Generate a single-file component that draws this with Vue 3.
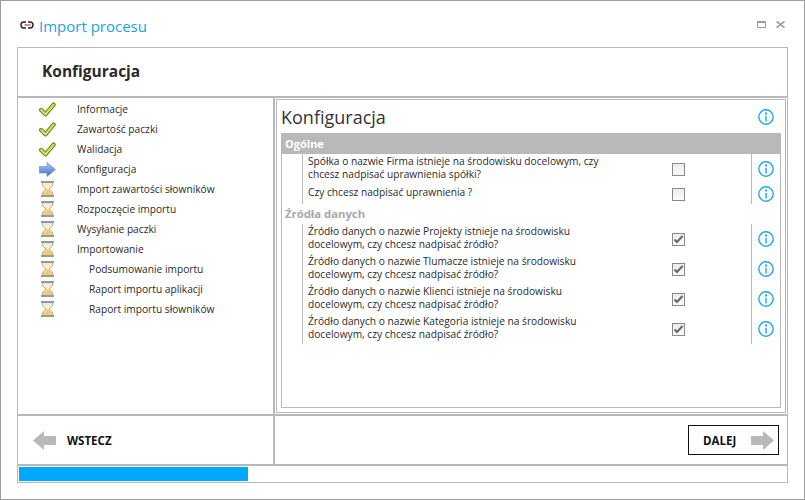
<template>
  <div class="window">
    <div class="titlebar">
      <svg class="logo" width="14" height="8" viewBox="0 0 14 8">
        <path d="M6 1H4a3 3 0 0 0 0 6h2M8 1h2a3 3 0 0 1 0 6H8" fill="none" stroke="#222" stroke-width="1.4" />
        <path d="M4.500 4h6" stroke="#d33" stroke-width="1.200" />
      </svg>
      <span class="title">Import procesu</span>
      <span class="win-buttons">
        <svg width="9" height="7" viewBox="0 0 9 7">
          <path d="M.5.5h8v6h-8z" fill="none" stroke="#999" />
          <path d="M0 1.500h9" stroke="#999" />
        </svg>
        <svg width="9" height="7" viewBox="0 0 9 7">
          <path d="M.5.300l8 6.400M8.500.300l-8 6.400" fill="none" stroke="#999" stroke-width="1.500" />
        </svg>
      </span>
    </div>

    <div class="frame">
      <div class="heading">Konfiguracja</div>

      <div class="middle">
        <ul class="steps">
          <li v-for="step in steps" :key="step.label" class="step" :class="{ sub: step.sub }">
            <span class="step-icon">
              <svg v-if="step.state === 'done'" width="17" height="15" viewBox="0 0 17 15">
                <path d="M2.200 8l4.300 4.300L14.600 2.700" fill="none" stroke="#6d9612" stroke-width="4.400" stroke-linejoin="round" stroke-linecap="round" />
                <path d="M2.200 8l4.300 4.300L14.600 2.700" fill="none" stroke="#cfe283" stroke-width="2" stroke-linejoin="round" stroke-linecap="round" />
              </svg>
              <svg v-else-if="step.state === 'current'" width="17" height="15" viewBox="0 0 17 15">
                <defs>
                  <linearGradient id="arrow" x1="0" y1="0" x2="0" y2="1">
                    <stop offset="0" stop-color="#b4cdf2" />
                    <stop offset="1" stop-color="#3a6cc6" />
                  </linearGradient>
                </defs>
                <path d="M.5 4.500h7.500V.5l8.500 7-8.500 7v-3.500H.5z" fill="url(#arrow)" stroke="#5b86cf" stroke-width=".6" />
              </svg>
              <svg v-else width="13" height="16" viewBox="0 0 13 16">
                <path d="M1.500 2h10v3L8 8l3.500 3v3h-10v-3L5 8 1.500 5z" fill="#fdeec4" stroke="#b4b4a8" />
                <path d="M2 2h9v1.800H2z" fill="#dcedf3" />
                <path d="M2 13.500v-2.200L6.500 8l4.500 3.300v2.200z" fill="#f3cc6c" />
                <path d="M0 0h13v2H0zM0 14h13v2H0z" fill="#9a9a8e" />
              </svg>
            </span>
            <span class="step-label">{{ step.label }}</span>
          </li>
        </ul>

        <div class="pane">
          <div class="pane-outer">
            <div class="pane-head">
              <span class="pane-title">Konfiguracja</span>
              <svg class="info" viewBox="0 0 16 16">
                <circle cx="8" cy="8" r="7.200" fill="none" stroke="#1ca8ee" stroke-width="1.400" />
                <path d="M8 6.800v5.700" stroke="#5cc3f2" stroke-width="2" />
                <path d="M8 3.400v2" stroke="#1ca8ee" stroke-width="2" />
              </svg>
            </div>

            <div class="pane-inner">
              <div class="group-bar">Ogólne</div>
              <div class="rows">
                <div v-for="row in generalRows" :key="row.text" class="row" :class="{ tight: row.tight }">
                  <div class="row-text">{{ row.text }}</div>
                  <div class="row-check"><span class="checkbox"></span></div>
                  <div class="row-info">
                    <svg class="info" viewBox="0 0 16 16">
                      <circle cx="8" cy="8" r="7.200" fill="none" stroke="#1ca8ee" stroke-width="1.400" />
                      <path d="M8 6.800v5.700" stroke="#5cc3f2" stroke-width="2" />
                      <path d="M8 3.400v2" stroke="#1ca8ee" stroke-width="2" />
                    </svg>
                  </div>
                </div>
              </div>

              <div class="group-label">Źródła danych</div>
              <div class="rows">
                <div v-for="name in sources" :key="name" class="row">
                  <div class="row-text">Źródło danych o nazwie {{ name }} istnieje na środowisku docelowym, czy chcesz nadpisać źródło?</div>
                  <div class="row-check">
                    <span class="checkbox">
                      <svg width="11" height="11" viewBox="0 0 11 11">
                        <path d="M1.500 5.500l2.500 2.500 5.500-6" fill="none" stroke="#666" stroke-width="2" />
                      </svg>
                    </span>
                  </div>
                  <div class="row-info">
                    <svg class="info" viewBox="0 0 16 16">
                      <circle cx="8" cy="8" r="7.200" fill="none" stroke="#1ca8ee" stroke-width="1.400" />
                      <path d="M8 6.800v5.700" stroke="#5cc3f2" stroke-width="2" />
                      <path d="M8 3.400v2" stroke="#1ca8ee" stroke-width="2" />
                    </svg>
                  </div>
                </div>
              </div>
            </div>
          </div>
        </div>
      </div>

      <div class="footer">
        <div class="back">
          <svg width="23" height="19" viewBox="0 0 23 19"><path d="M23 5H11V0L0 9.500 11 19v-5h12z" fill="#b9b9b9" /></svg>
          <span>WSTECZ</span>
        </div>
        <div class="next-wrap">
          <button class="next">
            <span>DALEJ</span>
            <svg width="23" height="19" viewBox="0 0 23 19"><path d="M0 5h12V0l11 9.500L12 19v-5H0z" fill="#b9b9b9" /></svg>
          </button>
        </div>
      </div>

      <div class="progress"><div class="progress-bar" :style="{ width: progress + 'px' }"></div></div>
    </div>
  </div>
</template>

<script setup>
const steps = [
  { label: 'Informacje', state: 'done' },
  { label: 'Zawartość paczki', state: 'done' },
  { label: 'Walidacja', state: 'done' },
  { label: 'Konfiguracja', state: 'current' },
  { label: 'Import zawartości słowników', state: 'wait' },
  { label: 'Rozpoczęcie importu', state: 'wait' },
  { label: 'Wysyłanie paczki', state: 'wait' },
  { label: 'Importowanie', state: 'wait' },
  { label: 'Podsumowanie importu', state: 'wait', sub: true },
  { label: 'Raport importu aplikacji', state: 'wait', sub: true },
  { label: 'Raport importu słowników', state: 'wait', sub: true },
]

const generalRows = [
  { text: 'Spółka o nazwie Firma istnieje na środowisku docelowym, czy chcesz nadpisać uprawnienia spółki?' },
  { text: 'Czy chcesz nadpisać uprawnienia ?', tight: true },
]

const sources = ['Projekty', 'Tlumacze', 'Klienci', 'Kategoria']

const progress = 229
</script>

<style>
html, body { margin: 0; background: #fff; }
</style>

<style scoped>
.window {
  box-sizing: border-box;
  width: 805px;
  height: 500px;
  padding: 0 16px 16px;
  background: #fff;
  border: 1px solid #9e9e9e;
  display: flex;
  flex-direction: column;
  font-family: "Open Sans", "Noto Sans", sans-serif;
  font-size: 10.2px;
  color: #2a2a2a;
}
.titlebar {
  box-sizing: border-box;
  height: 46px;
  flex: none;
  display: flex;
  align-items: center;
  gap: 5px;
  padding: 4px 3px 0 3px;
}
.logo { margin-top: -3px; }
.title {
  font-size: 15px;
  color: #1ba1e2;
}
.win-buttons {
  margin-left: auto;
  margin-top: -3px;
  display: flex;
  align-items: center;
  gap: 10px;
}
.frame {
  flex: 1;
  min-height: 0;
  display: flex;
  flex-direction: column;
  border: 1px solid #b9b9b9;
}
.heading {
  flex: none;
  box-sizing: border-box;
  height: 50px;
  padding: 0 0 2px 24px;
  display: flex;
  align-items: center;
  font-size: 15.500px;
  font-weight: 700;
  border-bottom: 2px solid #b9b9b9;
}
.middle {
  flex: 1;
  min-height: 0;
  display: flex;
}
.steps {
  width: 255px;
  flex: none;
  margin: 0;
  padding: 1px 0 0;
  list-style: none;
  border-right: 2px solid #b9b9b9;
}
.step {
  height: 20px;
  display: flex;
  align-items: center;
}
.step-icon {
  width: 59px;
  flex: none;
  padding-left: 21px;
  box-sizing: border-box;
}
.step-icon svg {
  display: block;
  width: 17px;
  margin: 0;
}
.step-label { white-space: nowrap; }
.step.sub .step-label { margin-left: 12px; }
.pane {
  flex: 1;
  min-width: 0;
  padding: 1px;
}
.pane-outer {
  box-sizing: border-box;
  height: 100%;
  border: 1px solid #b9b9b9;
  padding: 0 4px 4px;
  display: flex;
  flex-direction: column;
}
.pane-head {
  height: 33px;
  flex: none;
  display: flex;
  align-items: center;
  justify-content: space-between;
  padding: 0 7px 0 0;
}
.pane-title {
  font-size: 18px;
  color: #333;
}
.info {
  width: 16px;
  height: 16px;
  display: block;
}
.pane-inner {
  flex: 1;
  min-height: 0;
  border: 1px solid #b9b9b9;
}
.group-bar {
  height: 20px;
  line-height: 20px;
  padding-left: 3px;
  background: #b9b9b9;
  color: #fff;
  font-size: 11px;
  font-weight: 700;
}
.group-label {
  height: 20px;
  line-height: 20px;
  padding-left: 3px;
  color: #a8a8a8;
  font-size: 11.300px;
  font-weight: 700;
}
.rows { padding-left: 20px; }
.row {
  display: flex;
  align-items: center;
  height: 30px;
}
.row.tight { height: 20px; }
.row-text {
  box-sizing: border-box;
  width: 304px;
  flex: none;
  height: 100%;
  padding: 0 0 2px 5px;
  border-left: 1px solid #b9b9b9;
  line-height: 13px;
  display: flex;
  align-items: center;
}
.row.tight .row-text { padding-bottom: 4px; }
.row-check {
  width: 145px;
  flex: none;
  display: flex;
  justify-content: center;
}
.row-info {
  flex: 1;
  height: 100%;
  border-left: 1px solid #b9b9b9;
  display: flex;
  align-items: center;
  justify-content: center;
}
.checkbox {
  box-sizing: border-box;
  width: 13px;
  height: 13px;
  border: 1px solid #8a8a8a;
  background: linear-gradient(#ececec, #fbfbfb);
  display: flex;
  align-items: center;
  justify-content: center;
}
.footer {
  box-sizing: border-box;
  height: 52px;
  flex: none;
  display: flex;
  border-top: 2px solid #b9b9b9;
  border-bottom: 2px solid #b9b9b9;
}
.back {
  box-sizing: content-box;
  width: 240px;
  flex: none;
  display: flex;
  align-items: center;
  gap: 11px;
  padding-left: 15px;
  border-right: 2px solid #b9b9b9;
  font-size: 11.500px;
  font-weight: 700;
  color: #111;
}
.next-wrap {
  flex: 1;
  display: flex;
  align-items: center;
  justify-content: flex-end;
  padding-right: 8px;
}
.next {
  box-sizing: border-box;
  width: 91px;
  height: 30px;
  padding: 0 4px 0 14px;
  display: flex;
  align-items: center;
  justify-content: space-between;
  background: #fff;
  border: 1px solid #111;
  font-family: inherit;
  font-size: 11.500px;
  font-weight: 700;
  color: #111;
}
.progress {
  height: 16px;
  flex: none;
  padding: 1px;
  box-sizing: border-box;
}
.progress-bar {
  height: 14px;
  background: #00a8ff;
}
</style>
